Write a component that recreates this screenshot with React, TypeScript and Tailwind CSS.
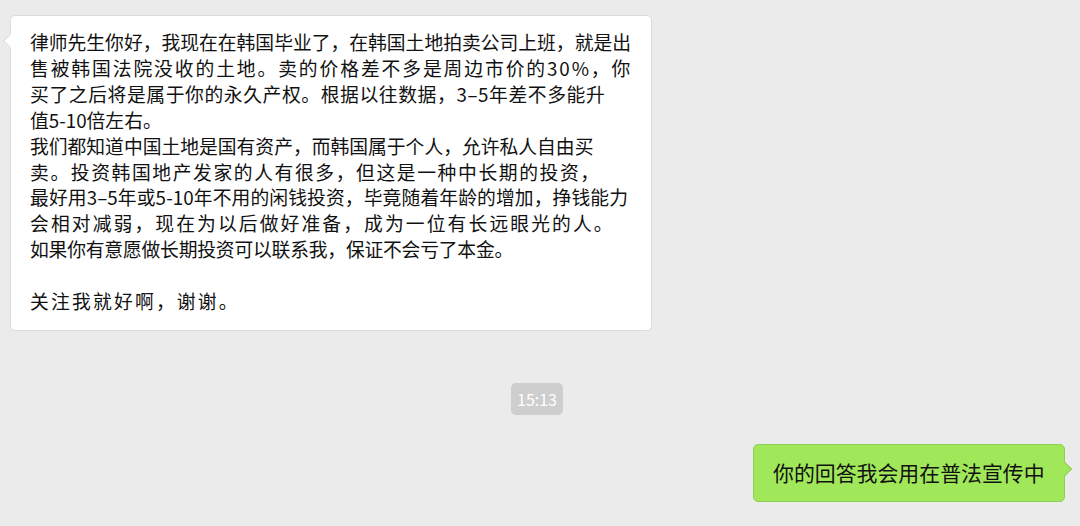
import React from "react";

const lines: { t: string; c: string }[] = [
  { t: "律师先生你好，我现在在韩国毕业了，在韩国土地拍卖公司上班，就是出", c: "tracking-[0px]" },
  { t: "售被韩国法院没收的土地。卖的价格差不多是周边市价的30%，你", c: "tracking-[1.9px]" },
  { t: "买了之后将是属于你的永久产权。根据以往数据，3–5年差不多能升", c: "tracking-[0.6px]" },
  { t: "值5-10倍左右。", c: "tracking-[0px]" },
  { t: "我们都知道中国土地是国有资产，而韩国属于个人，允许私人自由买", c: "tracking-[0px]" },
  { t: "卖。投资韩国地产发家的人有很多，但这是一种中长期的投资，", c: "tracking-[1.6px]" },
  { t: "最好用3–5年或5-10年不用的闲钱投资，毕竟随着年龄的增加，挣钱能力", c: "tracking-[0.1px]" },
  { t: "会相对减弱，现在为以后做好准备，成为一位有长远眼光的人。", c: "tracking-[2.1px]" },
  { t: "如果你有意愿做长期投资可以联系我，保证不会亏了本金。", c: "tracking-[-0.2px]" },
  { t: "\u00a0", c: "tracking-[0px]" },
  { t: "关注我就好啊，谢谢。", c: "tracking-[2.2px]" },
];

export default function App() {
  return (
    <div
      className="w-[1080px] h-[526px] bg-[#ebebeb] flex flex-col overflow-hidden"
      style={{ fontFamily: '"Noto Sans CJK SC", "Noto Sans", sans-serif' }}
    >
      <div className="relative ml-[10px] mt-[15px] w-[642px] bg-white border border-[#dcdcdc] rounded-[5px] pl-[19px] pt-[13px] pb-[16px]">
        <div className="absolute left-[-6px] top-[20px] w-[10px] h-[10px] bg-white border-l border-b border-[#dcdcdc] rotate-45" />
        <div className="relative text-[18.8px] leading-[25.9px] text-[#111] whitespace-nowrap">
          {lines.map((l, i) => (
            <div key={i} className={l.c}>
              {l.t}
            </div>
          ))}
        </div>
      </div>

      <div className="flex justify-center mt-[52px]">
        <div className="w-[52px] h-[32px] rounded-[5px] bg-[#cecece] text-white text-[16px] flex items-center justify-center translate-x-[-3px]">
          15:13
        </div>
      </div>

      <div className="flex justify-end mt-[29px] pr-[15px]">
        <div className="relative bg-[#a0e75a] border border-[#8fce56] rounded-[5px] w-[312px] h-[58px] flex items-center pl-[19px]">
          <div className="absolute right-[-6px] top-[19px] w-[10px] h-[10px] bg-[#a0e75a] border-t border-r border-[#8fce56] rotate-45" />
          <span className="relative text-[20.9px] text-[#111] whitespace-nowrap">
            你的回答我会用在普法宣传中
          </span>
        </div>
      </div>
    </div>
  );
}
